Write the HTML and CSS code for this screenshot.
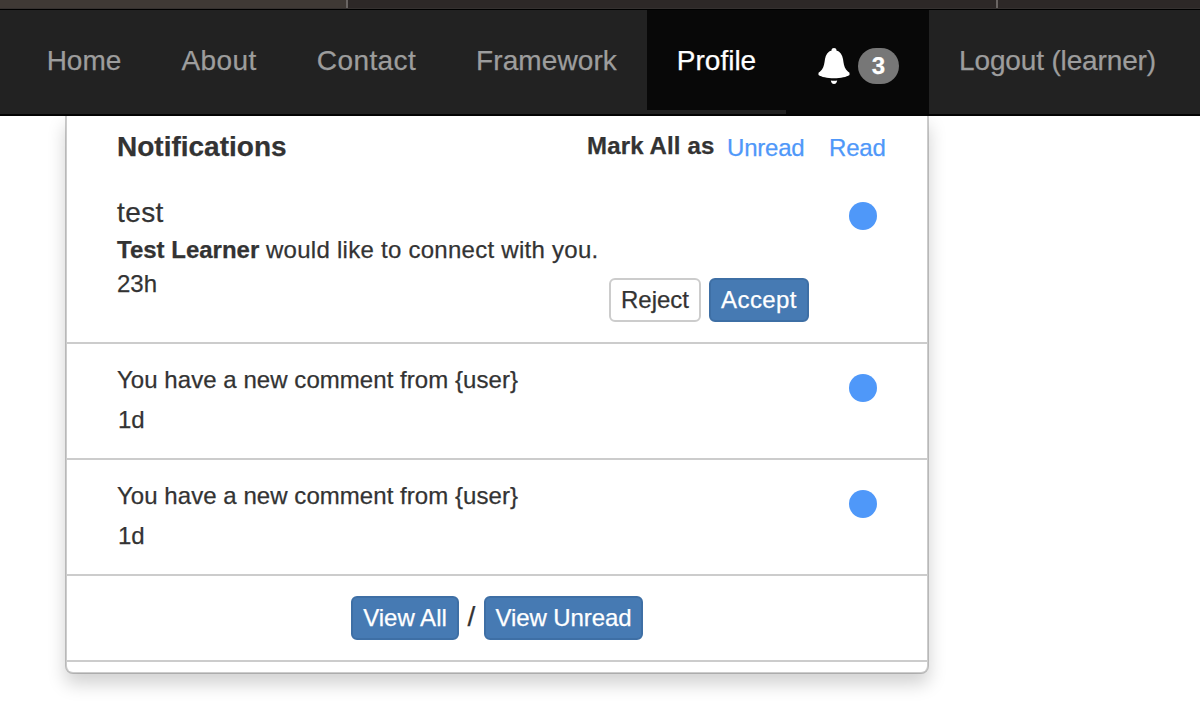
FILE: index.html
```html
<!DOCTYPE html>
<html lang="en">
<head>
<meta charset="utf-8">
<title>Notifications</title>
<link rel="stylesheet" href="styles.css">
</head>
<body>
<div class="tabs"><div class="tab tab-first"></div><div class="tab tab-second"></div><div class="tab"></div></div>
<nav class="navbar">
  <a class="item home"><span>Home</span></a>
  <a class="item about"><span>About</span></a>
  <a class="item contact"><span>Contact</span></a>
  <a class="item framework"><span>Framework</span></a>
  <a class="item profile"><span>Profile</span></a>
  <a class="item alerts">
    <svg class="bell" viewBox="0 0 32 36" width="32" height="36"><path fill="#fff" d="M13.6 1.500Q13.600 0 16 0T18.400 1.500V2.500C22 3.500 24.300 6.500 25 11C25.600 15.500 26 18.500 28 21.500Q30 23.800 31.500 24.800V27C28.500 29 23 30.200 16 30.200S3.500 29 .5 27V24.800Q2 23.800 4 21.500C6 18.500 6.400 15.500 7 11C7.700 6.500 10 3.500 13.600 2.500ZM12.800 32.500Q16 33.200 19.200 32.500Q18.500 36 16 36T12.800 32.500Z"/></svg>
    <span class="badge">3</span>
  </a>
  <a class="item logout"><span>Logout (learner)</span></a>
</nav>
<section class="panel">
  <header class="head">
    <h1 class="title">Notifications</h1>
    <strong class="mark">Mark All as</strong>
    <a class="link unread">Unread</a>
    <a class="link read">Read</a>
  </header>
  <article class="row request">
    <div class="body">
      <p class="subject">test</p>
      <p class="message"><b>Test Learner</b> <span class="note">would like to connect with you.</span></p>
      <p class="age">23h</p>
    </div>
    <div class="actions">
      <button class="btn plain reject">Reject</button>
      <button class="btn accept">Accept</button>
    </div>
    <i class="dot"></i>
  </article>
  <article class="row comment">
    <div class="body"><p class="text">You have a new comment from {user}</p><p class="day">1d</p></div>
    <i class="dot"></i>
  </article>
  <article class="row comment">
    <div class="body"><p class="text">You have a new comment from {user}</p><p class="day">1d</p></div>
    <i class="dot"></i>
  </article>
  <footer class="foot">
    <button class="btn all">View All</button>
    <span class="slash">/</span>
    <button class="btn view-unread">View Unread</button>
  </footer>
</section>
</body>
</html>
```
FILE: styles.css
```css
* { box-sizing: border-box; }
body {
  margin: 0;
  height: 704px;
  overflow: hidden;
  background: #fff;
  color: #333;
  font: 24px/34px "Liberation Sans", Arial, sans-serif;
  -webkit-text-stroke: .25px currentColor;
}
p, h1 { margin: 0; }
.tabs { display: flex; height: 9px; background: #2d2827; border-bottom: 1px solid #353130; }
.tab { flex: 1; }
.tab-first { flex: 0 0 348px; background: #3f3935; border-right: 2px solid #6a6563; }
.tab-second { flex: 0 0 650px; border-right: 2px solid #6a6563; }

.navbar {
  display: flex;
  align-items: flex-start;
  height: 107px;
  padding-left: 17px;
  background: #222;
  border-top: 1px solid #000;
  border-bottom: 2px solid #030303;
  position: relative;
  z-index: 1;
}
.item {
  display: flex;
  justify-content: center;
  height: 100px;
  color: #9d9d9d;
  font-size: 28px;
  line-height: 102px;
  white-space: nowrap;
}
.home { width: 134px; }
.about { width: 136px; letter-spacing: .4px; }
.contact { width: 159px; letter-spacing: .4px; }
.framework { width: 201px; letter-spacing: .1px; }
.profile { width: 139px; color: #fff; background: #080808; }
.alerts {
  width: 143px;
  height: 104px;
  background: #080808;
  justify-content: flex-start;
  padding: 38px 0 0 32px;
  gap: 8px;
}
.logout { width: 257px; letter-spacing: -.15px; }
.badge {
  width: 41px;
  height: 36px;
  border-radius: 18px;
  background: #777;
  color: #fff;
  font-size: 24px;
  font-weight: bold;
  line-height: 36px;
  text-align: center;
}

.panel {
  width: 864px;
  height: 558px;
  margin-left: 65px;
  background: #fff;
  border: 2px solid rgba(0, 0, 0, .2);
  border-top: 0;
  border-radius: 0 0 8px 8px;
  background-clip: padding-box;
  box-shadow: 0 10px 18px rgba(0, 0, 0, .18);
}
.head { display: flex; height: 60px; padding-left: 50px; line-height: 60px; white-space: nowrap; }
.title { width: 470px; font-size: 28px; line-height: 62px; }
.mark { width: 140px; letter-spacing: .15px; }
.link { color: #4f98f9; line-height: 64px; letter-spacing: -.2px; }
.unread { width: 102px; }

.row { display: flex; padding-left: 50px; border-bottom: 2px solid #ccc; white-space: nowrap; }
.body { flex: 1; }
.dot { width: 28px; height: 28px; margin: 30px 50px 0 0; border-radius: 50%; background: #4f98f9; }
.request { height: 168px; }
.request .body { padding-top: 20px; }
.request .dot { margin: 26px 50px 0 40px; }
.subject { height: 37px; font-size: 28px; line-height: 33px; letter-spacing: .4px; }
.note { letter-spacing: .27px; }
.actions { display: flex; gap: 8px; padding-top: 102px; }
.comment { height: 116px; line-height: 40px; }
.comment .body { padding-top: 16px; }
.text { letter-spacing: .05px; }
.day { padding-left: 1px; }

.btn {
  height: 44px;
  padding: 0;
  border: 2px solid #3e6fa5;
  border-radius: 6px;
  background: #467ab3;
  color: #fff;
  font: 24px/40px "Liberation Sans", Arial, sans-serif;
  white-space: nowrap;
}
.plain { background: #fff; border-color: #ccc; color: #333; }
.reject { width: 92px; }
.accept { width: 100px; letter-spacing: .4px; }
.all { width: 108px; }
.view-unread { width: 159px; letter-spacing: -.1px; }
.foot { display: flex; height: 86px; padding: 20px 0 0 284px; border-bottom: 2px solid #ccc; }
.slash { width: 25px; text-align: center; font-size: 28px; line-height: 42px; }
```
